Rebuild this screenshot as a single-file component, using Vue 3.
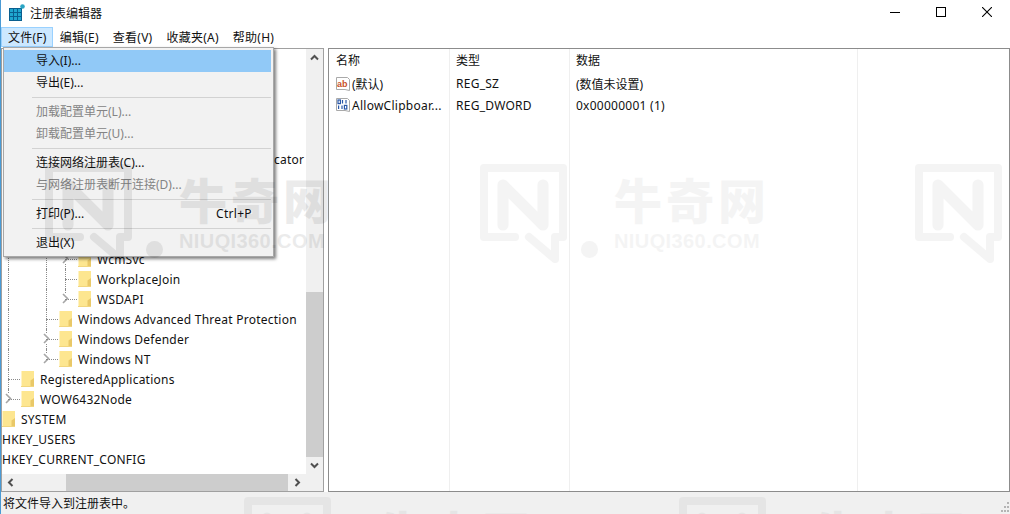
<script setup>
const menus = ['文件(F)', '编辑(E)', '查看(V)', '收藏夹(A)', '帮助(H)']

const fileMenu = [
  { text: '导入(I)...', active: true },
  { text: '导出(E)...' },
  { sep: true },
  { text: '加载配置单元(L)...', disabled: true },
  { text: '卸载配置单元(U)...', disabled: true },
  { sep: true },
  { text: '连接网络注册表(C)...' },
  { text: '与网络注册表断开连接(D)...', disabled: true },
  { sep: true },
  { text: '打印(P)...', key: 'Ctrl+P' },
  { sep: true },
  { text: '退出(X)' },
]

// rows behind the open menu stay blank, only the tail of one long key sticks out
const blank = { cols: [], text: '', noFolder: true }

// cols: one flag per indent column, 'v' line runs through, 'h' branch, 'e' last branch, '' empty
const tree = [
  blank,
  blank,
  blank,
  blank,
  blank,
  { cols: [], text: 'cator', noFolder: true, tail: true },
  blank,
  blank,
  blank,
  blank,
  { cols: ['v', '', 'v', 'h'], text: 'WcmSvc', arrow: true },
  { cols: ['v', '', 'v', 'h'], text: 'WorkplaceJoin' },
  { cols: ['v', '', 'v', 'e'], text: 'WSDAPI', arrow: true },
  { cols: ['v', '', 'h'], text: 'Windows Advanced Threat Protection' },
  { cols: ['v', '', 'h'], text: 'Windows Defender', arrow: true },
  { cols: ['v', '', 'e'], text: 'Windows NT', arrow: true },
  { cols: ['h'], text: 'RegisteredApplications' },
  { cols: ['e'], text: 'WOW6432Node', arrow: true },
  { cols: [], text: 'SYSTEM' },
  { cols: [], text: 'HKEY_USERS', noFolder: true },
  { cols: [], text: 'HKEY_CURRENT_CONFIG', noFolder: true },
]

const columns = [
  { title: '名称', cells: [{ text: '(默认)', icon: 'ab' }, { text: 'AllowClipboar...', icon: 'bin', latin: true }] },
  { title: '类型', cells: [{ text: 'REG_SZ', latin: true }, { text: 'REG_DWORD', latin: true }] },
  { title: '数据', cells: [{ text: '(数值未设置)' }, { text: '0x00000001 (1)', latin: true }] },
  { title: '', cells: [] },
]

const marks = [
  { x: 43, y: 163, strong: true },
  { x: 478, y: 163 },
  { x: 913, y: 163, logoOnly: true },
  { x: 242, y: 496 },
  { x: 677, y: 496 },
]
</script>

<template>
  <div class="window">
    <div class="titlebar">
      <svg class="app-icon" width="17" height="17" viewBox="0 0 17 17">
        <rect x="0" y="4" width="13" height="13" fill="#0a5f8f" />
        <g fill="#1fa6cf">
          <rect x="1" y="5" width="3" height="3" />
          <rect x="5" y="5" width="3" height="3" />
          <rect x="9" y="5" width="3" height="3" />
          <rect x="1" y="9" width="3" height="3" />
          <rect x="5" y="9" width="3" height="3" />
          <rect x="9" y="9" width="3" height="3" />
          <rect x="1" y="13" width="3" height="3" />
          <rect x="5" y="13" width="3" height="3" />
          <rect x="9" y="13" width="3" height="3" />
        </g>
        <circle cx="13.5" cy="2.5" r="2.3" fill="#2aa5c4" />
      </svg>
      <span class="title">注册表编辑器</span>
      <div class="controls">
        <div class="ctl">
          <svg width="10" height="10" viewBox="0 0 10 10"><path d="M0 5.5H10" stroke="#000" fill="none" /></svg>
        </div>
        <div class="ctl">
          <svg width="10" height="10" viewBox="0 0 10 10"><rect x="0.5" y="0.5" width="9" height="9" stroke="#000" fill="none" /></svg>
        </div>
        <div class="ctl">
          <svg width="10" height="10" viewBox="0 0 10 10"><path d="M0 0L10 10M10 0L0 10" stroke="#000" fill="none" stroke-width="1.1" /></svg>
        </div>
      </div>
    </div>

    <div class="menubar">
      <div v-for="(m, i) in menus" :key="m" class="menubar-item" :class="{ open: i === 0 }">{{ m }}</div>
    </div>

    <div class="panes">
      <div class="tree-pane">
        <div class="tree">
          <div v-for="(row, r) in tree" :key="r" class="tree-row">
            <span v-for="(c, i) in row.cols" :key="i" class="indent" :class="'line-' + c">
              <svg v-if="row.arrow && i === row.cols.length - 1" class="expander" width="9" height="11" viewBox="0 0 9 11">
                <rect width="9" height="11" fill="#fff" />
                <path d="M2 1L6.5 5.5L2 10" fill="none" stroke="#a6a6a6" stroke-width="1.6" />
              </svg>
            </span>
            <svg v-if="!row.noFolder" class="folder" width="13" height="16" viewBox="0 0 13 16">
              <path d="M0 0H13V16H0Z" fill="#fde690" />
              <path d="M0 0H1V16H0Z" fill="#fff3c4" />
              <path d="M9.5 16V9.5L13 7V16Z" fill="#e9c868" />
              <path d="M0 15.5H13" stroke="#f2d67e" />
            </svg>
            <span class="tree-text" :class="{ tail: row.tail }">{{ row.text }}</span>
          </div>
        </div>

        <div class="vscroll">
          <div class="sb-btn">
            <svg width="9" height="7" viewBox="0 0 9 7"><path d="M1 5.5L4.5 2L8 5.5" fill="none" stroke="#505050" stroke-width="2" /></svg>
          </div>
          <div class="vtrack"><div class="vthumb"></div></div>
          <div class="sb-btn">
            <svg width="9" height="7" viewBox="0 0 9 7"><path d="M1 1.5L4.5 5L8 1.5" fill="none" stroke="#505050" stroke-width="2" /></svg>
          </div>
        </div>

        <div class="hscroll">
          <div class="sb-btn">
            <svg width="7" height="9" viewBox="0 0 7 9"><path d="M5.5 1L2 4.5L5.5 8" fill="none" stroke="#505050" stroke-width="2" /></svg>
          </div>
          <div class="htrack"><div class="hthumb"></div></div>
          <div class="sb-btn">
            <svg width="7" height="9" viewBox="0 0 7 9"><path d="M1.5 1L5 4.5L1.5 8" fill="none" stroke="#505050" stroke-width="2" /></svg>
          </div>
        </div>
        <div class="corner"></div>
      </div>

      <div class="list-pane">
        <div v-for="col in columns" :key="col.title" class="col">
          <div class="col-head">{{ col.title }}</div>
          <div v-for="cell in col.cells" :key="cell.text" class="cell">
            <svg v-if="cell.icon === 'ab'" class="val-icon" width="16" height="16" viewBox="0 0 16 16">
              <path d="M1.5 1.5H12.5L14.5 3.5V14.5L10 13.5H1.5Z" fill="#fff" stroke="#a9a9a9" />
              <text x="2" y="10.5" class="ab-glyph">ab</text>
            </svg>
            <svg v-if="cell.icon === 'bin'" class="val-icon" width="16" height="16" viewBox="0 0 16 16">
              <path d="M1.5 1.5H12.5L14.5 3.5V14.5L10 13.5H1.5Z" fill="#fff" stroke="#a9a9a9" />
              <g fill="none" stroke="#2a58a8" stroke-width="1.2">
                <rect x="3" y="3" width="2.4" height="3.6" />
                <path d="M7.5 3V6.6M11 3V6.6" />
                <path d="M3.6 8.4V12M7 8.4V12" />
                <rect x="9.4" y="8.4" width="2.4" height="3.6" />
              </g>
            </svg>
            <span :class="{ latin: cell.latin }">{{ cell.text }}</span>
          </div>
        </div>
      </div>
    </div>

    <div class="statusbar">
      <span>将文件导入到注册表中。</span>
      <svg class="grip" width="8" height="10" viewBox="0 0 8 10">
        <g fill="#b4b4b4">
          <rect x="6" y="0" width="2" height="2" />
          <rect x="3" y="4" width="2" height="2" />
          <rect x="6" y="4" width="2" height="2" />
          <rect x="0" y="8" width="2" height="2" />
          <rect x="3" y="8" width="2" height="2" />
          <rect x="6" y="8" width="2" height="2" />
        </g>
      </svg>
    </div>

    <div class="file-menu">
      <template v-for="(item, i) in fileMenu" :key="i">
        <div v-if="item.sep" class="menu-sep"></div>
        <div v-else class="menu-item" :class="{ active: item.active, disabled: item.disabled }">
          <span>{{ item.text }}</span>
          <span v-if="item.key" class="menu-key">{{ item.key }}</span>
        </div>
      </template>
    </div>

    <div
      v-for="(m, i) in marks"
      :key="i"
      class="watermark"
      :class="{ strong: m.strong }"
      :style="{ left: m.x + 'px', top: m.y + 'px' }"
    >
      <svg class="wm-logo" width="89" height="100" viewBox="0 0 89 100">
        <g fill="none" stroke="#000" stroke-linejoin="round" stroke-linecap="round">
          <path d="M36 74H5V5H84V74H76V96L50 74" stroke-width="8" />
          <path d="M24 62V22L64 62V22" stroke-width="11" />
        </g>
      </svg>
      <template v-if="!m.logoOnly">
        <div class="wm-dot"></div>
        <div class="wm-text">
          <div class="wm-cn">牛奇网</div>
          <div class="wm-en">NIUQI360.COM</div>
        </div>
      </template>
    </div>
  </div>
</template>

<style>
html,
body {
  margin: 0;
  background: #fff;
  overflow: hidden;
}
</style>

<style scoped>
.window {
  position: relative;
  width: 1010px;
  height: 514px;
  box-sizing: border-box;
  border-left: 1px solid #4a9ad4;
  display: flex;
  flex-direction: column;
  overflow: hidden;
  background: #fff;
  font-family: "Noto Sans", "Noto Sans CJK SC", sans-serif;
  font-size: 12px;
  color: #111;
}

.titlebar {
  height: 27px;
  display: flex;
  align-items: center;
  flex-shrink: 0;
}

.app-icon {
  margin-left: 8px;
  margin-top: -2px;
}

.title {
  margin-left: 4px;
  margin-top: -1px;
}

.controls {
  margin-left: auto;
  display: flex;
  margin-top: -3px;
}

.ctl {
  width: 46px;
  height: 24px;
  display: flex;
  align-items: center;
  justify-content: center;
}

.menubar {
  height: 21px;
  display: flex;
  flex-shrink: 0;
}

.menubar-item {
  padding: 0 7px;
  height: 20px;
  line-height: 19px;
  box-sizing: border-box;
  border: 1px solid transparent;
  border-left: 0;
  border-right: 0;
  letter-spacing: 0.25px;
}

.menubar-item.open {
  background: #cce8ff;
  border: 1px solid #99d1ff;
  padding: 0 5px 0 6px;
}

.panes {
  flex: 1;
  display: flex;
  min-height: 0;
}

.tree-pane {
  width: 323px;
  box-sizing: border-box;
  border: 1px solid #a0a0a0;
  display: grid;
  grid-template-columns: 1fr 17px;
  grid-template-rows: 1fr 17px;
  flex-shrink: 0;
}

.tree {
  overflow: hidden;
  padding-bottom: 2px;
}

.tree-row {
  height: 20px;
  display: flex;
  align-items: center;
  white-space: nowrap;
}

.tree-text {
  letter-spacing: 0.24px;
}

.tree-text.tail {
  margin-left: 272px;
}

.indent {
  width: 19px;
  height: 20px;
  flex-shrink: 0;
  position: relative;
}

.indent.line-v::before,
.indent.line-h::before,
.indent.line-e::before {
  content: "";
  position: absolute;
  left: 6px;
  top: 0;
  height: 100%;
  border-left: 1px dotted #8a8a8a;
}

.indent.line-e::before {
  height: 50%;
}

.indent.line-h::after,
.indent.line-e::after {
  content: "";
  position: absolute;
  left: 6px;
  top: 10px;
  width: 12px;
  border-top: 1px dotted #8a8a8a;
}

.expander {
  position: absolute;
  left: 2px;
  top: 4px;
}

.folder {
  flex-shrink: 0;
  margin-right: 6px;
}

.vscroll {
  grid-column: 2;
  grid-row: 1;
  background: #f0f0f0;
  display: flex;
  flex-direction: column;
}

.hscroll {
  grid-column: 1;
  grid-row: 2;
  background: #f0f0f0;
  display: flex;
}

.corner {
  background: #f0f0f0;
}

.sb-btn {
  flex: 0 0 17px;
  height: 17px;
  display: flex;
  align-items: center;
  justify-content: center;
}

.vtrack {
  flex: 1;
  display: flex;
  flex-direction: column;
  justify-content: flex-end;
}

.vthumb {
  height: 165px;
  background: #cdcdcd;
}

.htrack {
  flex: 1;
  padding-left: 47px;
}

.hthumb {
  width: 222px;
  height: 100%;
  background: #cdcdcd;
}

.list-pane {
  flex: 1;
  margin-left: 4px;
  border: 1px solid #8c8c8c;
  display: flex;
  min-width: 0;
}

.col {
  border-right: 1px solid #efefef;
  box-sizing: border-box;
  padding-left: 6px;
}

.col:nth-child(1) {
  width: 121px;
}

.col:nth-child(2) {
  width: 120px;
}

.col:nth-child(3) {
  width: 288px;
}

.col:nth-child(4) {
  flex: 1;
  border-right: 0;
}

.col-head {
  height: 24px;
  line-height: 24px;
}

.col:nth-child(1) .col-head {
  padding-left: 1px;
}

.cell {
  height: 21.5px;
  display: flex;
  align-items: center;
  white-space: nowrap;
}

.latin {
  letter-spacing: 0.26px;
}

.val-icon {
  flex-shrink: 0;
  margin-right: 1px;
}

.ab-glyph {
  font-family: "Liberation Sans", sans-serif;
  font-size: 9px;
  font-weight: 700;
  fill: #c8502a;
}

.statusbar {
  height: 22px;
  background: #f0f0f0;
  flex-shrink: 0;
  display: flex;
  align-items: center;
  padding-left: 2px;
  position: relative;
}

.grip {
  position: absolute;
  right: 1px;
  bottom: 2px;
}

.file-menu {
  position: absolute;
  z-index: 2;
  left: 2px;
  top: 47px;
  width: 271px;
  height: 210px;
  box-sizing: border-box;
  background: #f2f2f2;
  border: 1px solid #a8a8a8;
  padding: 2px 2px 0 0;
  box-shadow: 2px 2px 3px rgba(0, 0, 0, 0.5);
}

.menu-item {
  height: 22px;
  line-height: 21px;
  padding-left: 32px;
  position: relative;
}

.menu-item.active {
  background: #91c9f7;
}

.menu-item.disabled {
  color: #848484;
}

.menu-key {
  position: absolute;
  left: 212px;
  top: 0;
  letter-spacing: 0.3px;
}

.menu-sep {
  height: 7px;
  margin-left: 28px;
  background: linear-gradient(#d2d2d2, #d2d2d2) no-repeat 0 3px / 100% 1px;
}

.watermark {
  position: absolute;
  z-index: 3;
  display: flex;
  pointer-events: none;
  opacity: 0.04;
  color: #000;
}

.watermark.strong {
  opacity: 0.075;
}

.wm-logo {
  flex-shrink: 0;
}

.wm-dot {
  width: 17px;
  height: 17px;
  border-radius: 50%;
  background: #000;
  margin: 78px 0 0 13px;
  flex-shrink: 0;
}

.wm-text {
  margin-left: 16px;
  margin-top: 9px;
  white-space: nowrap;
}

.wm-cn {
  font-family: "Noto Sans CJK SC", sans-serif;
  font-weight: 900;
  font-size: 48px;
  line-height: 52px;
  letter-spacing: 4px;
}

.wm-en {
  font-family: "Liberation Sans", sans-serif;
  font-weight: 700;
  font-size: 20px;
  line-height: 24px;
  margin-top: 5px;
  letter-spacing: 0.4px;
}
</style>
